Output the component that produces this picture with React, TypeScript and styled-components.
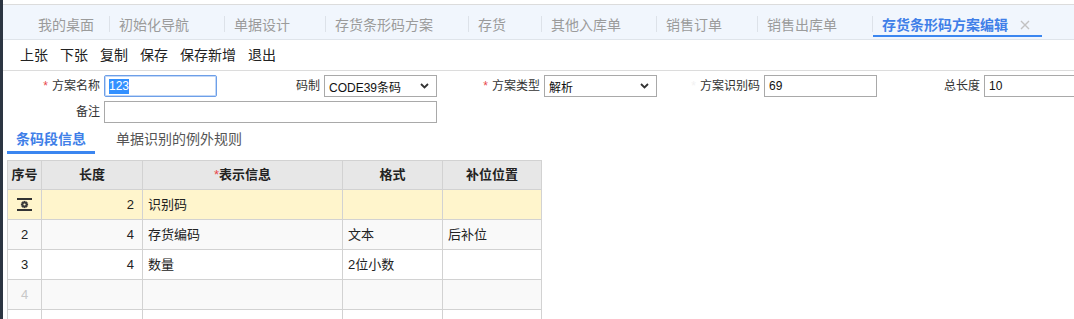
import * as React from "react";
import styled, { createGlobalStyle, css } from "styled-components";

const GlobalStyle = createGlobalStyle`
  html, body {
    margin: 0;
    padding: 0;
    background: #fff;
  }
  body {
    font-family: "Liberation Sans", "Noto Sans CJK SC", sans-serif;
    color: #333;
  }
`;

const Page = styled.div`
  display: flex;
  width: 1074px;
  height: 319px;
  overflow: hidden;
  background: #fff;
`;

const SideStrip = styled.div`
  flex: 0 0 3px;
  background: #2c3542;
`;

const Main = styled.div`
  flex: 1;
  min-width: 0;
  display: flex;
  flex-direction: column;
  overflow: hidden;

  & > * {
    flex-shrink: 0;
  }
`;

/* ---- page tabs ---- */

const TabBar = styled.div`
  display: flex;
  align-items: flex-start;
  height: 34px;
  margin-top: 4px;
  padding-left: 25px;
  background: #f1f6fd;
  border-top: 1px solid #dcdcdc;
  border-bottom: 1px solid #dfe4ea;
`;

const Tab = styled.div<{ $active?: boolean; $first?: boolean }>`
  display: flex;
  align-items: center;
  height: 32px;
  box-sizing: border-box;
  padding: 10px 35px 0 9px;
  font-size: 14px;
  line-height: 20px;
  color: #9b9b9b;
  white-space: nowrap;
  border-bottom: 2px solid transparent;
  flex-shrink: 0;

  ${(p) =>
    p.$first &&
    css`
      padding-left: 10px;
      padding-right: 15px;
    `}

  ${(p) =>
    p.$active &&
    css`
      padding-right: 12px;
      color: #3f7fe8;
      font-weight: 700;
      border-bottom-color: #3b86f0;
    `}
`;

const TabDivider = styled.span`
  flex: 0 0 1px;
  height: 16px;
  margin-top: 11px;
  background: #dde2e9;
`;

const CloseIcon = styled.svg`
  margin-left: 12px;
  flex-shrink: 0;
`;

/* ---- toolbar ---- */

const Toolbar = styled.div`
  display: flex;
  gap: 12px;
  height: 30px;
  padding-left: 17px;
  border-bottom: 1px solid #dcdcdc;
  font-size: 14px;
  line-height: 30px;
  color: #222;
`;

const ToolButton = styled.span`
  cursor: pointer;
  white-space: nowrap;
`;

/* ---- header form ---- */

const Form = styled.div`
  display: grid;
  grid-template-columns: repeat(5, 214px);
  grid-auto-rows: 22px;
  column-gap: 6px;
  row-gap: 4px;
  padding-top: 4px;
`;

const Field = styled.div<{ $span?: number }>`
  display: flex;
  align-items: center;
  gap: 4px;
  grid-column: span ${(p) => p.$span ?? 1};
`;

const Label = styled.label`
  flex: 0 0 97px;
  text-align: right;
  font-size: 12px;
  line-height: 22px;
  color: #333;
  white-space: nowrap;
`;

const Required = styled.span<{ $faint?: boolean }>`
  color: ${(p) => (p.$faint ? "#f2f2f2" : "#e8484d")};
  margin-right: 4px;
`;

const TextBox = styled.div<{ $focused?: boolean; $wide?: boolean }>`
  box-sizing: border-box;
  height: 22px;
  flex: ${(p) => (p.$wide ? "1" : "0 0 113px")};
  padding: 0 4px;
  border: 1px solid #a9a9a9;
  background: #fff;
  font-size: 12px;
  line-height: 20px;
  color: #111;
  white-space: nowrap;
  overflow: hidden;

  ${(p) =>
    p.$focused &&
    css`
      border-color: #6d9fe8;
      border-radius: 2px;
      box-shadow: inset 0 0 0 1px #c3d8f7;
    `}
`;

const Selected = styled.span`
  display: inline-block;
  line-height: 15px;
  background: #3390ff;
  color: #fff;
`;

const SelectBox = styled.div`
  box-sizing: border-box;
  height: 22px;
  flex: 0 0 113px;
  display: flex;
  align-items: center;
  justify-content: space-between;
  padding: 0 7px 0 4px;
  border: 1px solid #a9a9a9;
  background: #fff;
  font-size: 12px;
  color: #111;
  white-space: nowrap;
`;

/* ---- sub tabs ---- */

const SubTabs = styled.div`
  display: flex;
  gap: 12px;
  margin: 1px 0 0 4px;
`;

const SubTab = styled.div<{ $active?: boolean }>`
  box-sizing: border-box;
  height: 30px;
  padding: 5px 9px 0;
  font-size: 14px;
  line-height: 20px;
  color: #555;
  white-space: nowrap;
  border-bottom: 3px solid transparent;

  ${(p) =>
    p.$active &&
    css`
      color: #3f7fe8;
      font-weight: 700;
      border-bottom-color: #3b86f0;
    `}
`;

/* ---- grid ---- */

const Grid = styled.div`
  display: grid;
  grid-template-columns: 34px 101px 200px 100px 99px;
  width: max-content;
  margin: 6px 0 0 4px;
  border-left: 1px solid #d2d2d2;
  border-top: 1px solid #d2d2d2;
`;

const HeadCell = styled.div`
  box-sizing: border-box;
  height: 29px;
  border-right: 1px solid #d2d2d2;
  border-bottom: 1px solid #d2d2d2;
  background: #e7e7e7;
  font-size: 13px;
  font-weight: 700;
  line-height: 28px;
  text-align: center;
  color: #222;
  white-space: nowrap;
`;

const HeadStar = styled.span`
  color: #e8484d;
  font-weight: 400;
`;

type Tone = "current" | "stripe" | "plain";

const rowBg: Record<Tone, string> = {
  current: "#fff5cc",
  stripe: "#f9f9f9",
  plain: "#fff",
};

const Cell = styled.div<{ $tone: Tone; $align?: "left" | "right" | "center"; $muted?: boolean }>`
  box-sizing: border-box;
  height: 30px;
  display: flex;
  align-items: center;
  justify-content: ${(p) =>
    p.$align === "right" ? "flex-end" : p.$align === "center" ? "center" : "flex-start"};
  padding: 0 ${(p) => (p.$align === "right" ? "8px" : "5px")};
  border-right: 1px solid #d2d2d2;
  border-bottom: 1px solid #d2d2d2;
  background: ${(p) => rowBg[p.$tone]};
  font-size: 13px;
  line-height: 29px;
  color: ${(p) => (p.$muted ? "#c8c8c8" : "#222")};
  white-space: nowrap;
`;

const tabs = [
  "我的桌面",
  "初始化导航",
  "单据设计",
  "存货条形码方案",
  "存货",
  "其他入库单",
  "销售订单",
  "销售出库单",
  "存货条形码方案编辑",
];

const actions = ["上张", "下张", "复制", "保存", "保存新增", "退出"];

interface Segment {
  length: string;
  info: string;
  format: string;
  pad: string;
}

const segments: Segment[] = [
  { length: "2", info: "识别码", format: "", pad: "" },
  { length: "4", info: "存货编码", format: "文本", pad: "后补位" },
  { length: "4", info: "数量", format: "2位小数", pad: "" },
  { length: "", info: "", format: "", pad: "" },
  { length: "", info: "", format: "", pad: "" },
];

const RowMarker = () => (
  <svg width="15" height="13" viewBox="0 0 15 13">
    <rect x="0" y="0" width="15" height="2" fill="#333" />
    <rect x="0" y="11" width="15" height="2" fill="#333" />
    <g transform="translate(7.5 6.5)" fill="#3a3a3a">
      {[0, 45, 90, 135].map((a) => (
        <rect key={a} x="-1" y="-3.6" width="2" height="7.2" transform={`rotate(${a})`} />
      ))}
      <circle r="2.8" />
      <circle r="1.1" fill="#fff5cc" />
    </g>
  </svg>
);

const Chevron = () => (
  <svg width="9" height="6" viewBox="0 0 9 6">
    <polyline points="1,1 4.5,4.5 8,1" fill="none" stroke="#333" strokeWidth="1.8" />
  </svg>
);

const App: React.FC = () => {
  const last = tabs.length - 1;

  return (
    <>
      <GlobalStyle />
      <Page>
        <SideStrip />
        <Main>
          <TabBar>
            {tabs.map((t, i) => (
              <React.Fragment key={t}>
                {i > 0 && <TabDivider />}
                <Tab $first={i === 0} $active={i === last}>
                  {t}
                  {i === last && (
                    <CloseIcon width="10" height="10" viewBox="0 0 10 10">
                      <path d="M1 1L9 9M9 1L1 9" stroke="#c2c2c2" strokeWidth="1.4" />
                    </CloseIcon>
                  )}
                </Tab>
              </React.Fragment>
            ))}
          </TabBar>

          <Toolbar>
            {actions.map((a) => (
              <ToolButton key={a}>{a}</ToolButton>
            ))}
          </Toolbar>

          <Form>
            <Field>
              <Label>
                <Required>*</Required>方案名称
              </Label>
              <TextBox $focused>
                <Selected>123</Selected>
              </TextBox>
            </Field>
            <Field>
              <Label>码制</Label>
              <SelectBox>
                <span>CODE39条码</span>
                <Chevron />
              </SelectBox>
            </Field>
            <Field>
              <Label>
                <Required>*</Required>方案类型
              </Label>
              <SelectBox>
                <span>解析</span>
                <Chevron />
              </SelectBox>
            </Field>
            <Field>
              <Label>
                <Required $faint>*</Required>方案识别码
              </Label>
              <TextBox>69</TextBox>
            </Field>
            <Field>
              <Label>总长度</Label>
              <TextBox>10</TextBox>
            </Field>
            <Field $span={2}>
              <Label>备注</Label>
              <TextBox $wide />
            </Field>
          </Form>

          <SubTabs>
            <SubTab $active>条码段信息</SubTab>
            <SubTab>单据识别的例外规则</SubTab>
          </SubTabs>

          <Grid>
            <HeadCell>序号</HeadCell>
            <HeadCell>长度</HeadCell>
            <HeadCell>
              <HeadStar>*</HeadStar>表示信息
            </HeadCell>
            <HeadCell>格式</HeadCell>
            <HeadCell>补位位置</HeadCell>

            {segments.map((s, i) => {
              const tone: Tone = i === 0 ? "current" : i % 2 === 1 ? "stripe" : "plain";
              return (
                <React.Fragment key={i}>
                  <Cell $tone={tone} $align="center" $muted={i === 3}>
                    {i === 0 ? <RowMarker /> : i < 4 ? i + 1 : ""}
                  </Cell>
                  <Cell $tone={tone} $align="right">
                    {s.length}
                  </Cell>
                  <Cell $tone={tone}>{s.info}</Cell>
                  <Cell $tone={tone}>{s.format}</Cell>
                  <Cell $tone={tone}>{s.pad}</Cell>
                </React.Fragment>
              );
            })}
          </Grid>
        </Main>
      </Page>
    </>
  );
};

export default App;
